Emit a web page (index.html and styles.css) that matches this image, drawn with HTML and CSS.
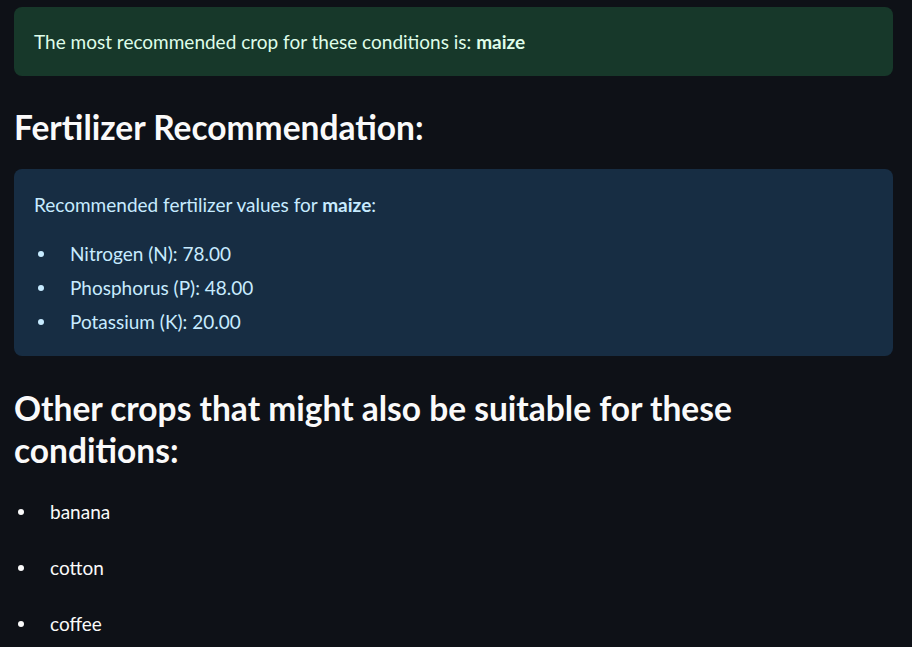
FILE: index.html
```html
<!DOCTYPE html>
<html>
<head>
<meta charset="utf-8">
<link rel="stylesheet" href="styles.css">
</head>
<body>
<main class="page">
  <div class="alert alert-success">The most recommended crop for these conditions is: <strong>maize</strong></div>
  <h3 class="heading heading-semi">Fertilizer Recommendation:</h3>
  <div class="alert alert-info">
    <p class="alert-lead">Recommended fertilizer values for <strong>maize</strong>:</p>
    <ul class="dots dots-tight">
      <li>Nitrogen (N): 78.00</li>
      <li>Phosphorus (P): 48.00</li>
      <li>Potassium (K): 20.00</li>
    </ul>
  </div>
  <h3 class="heading heading-bold">Other crops that might also be suitable for these conditions:</h3>
  <ul class="dots dots-loose">
    <li>banana</li>
    <li>cotton</li>
    <li>coffee</li>
  </ul>
</main>
</body>
</html>
```

FILE: styles.css
```css
html, body {
  margin: 0;
  padding: 0;
  background: #0e1117;
}
body {
  font-family: Lato, "Noto Sans", sans-serif;
  font-size: 19px;
  color: #fafafa;
}
.page {
  width: 879px;
  padding: 7px 0 0 14px;
}
.alert {
  border-radius: 8px;
  padding: 22px 20px;
  line-height: 25px;
}
.alert strong { font-weight: 700; }
.alert-success {
  background: #17382a;
  color: #dffde9;
}
.alert-info {
  background: #172d43;
  color: #c7ebff;
  padding: 23px 20px 17px;
}
.alert-lead { margin: 0 0 20px; }
.heading {
  margin: 0;
  line-height: 42px;
  color: #fafafa;
  width: 760px;
}
.heading-semi {
  font-size: 33.5px;
  font-weight: 700;
  padding: 30px 0 21px;
}
.heading-bold {
  font-size: 33.5px;
  font-weight: 700;
  padding: 31px 0 13px;
}
.dots {
  list-style: none;
  margin: 0;
  padding: 0;
}
.dots li {
  position: relative;
}
.dots li::before {
  content: "";
  position: absolute;
  width: 6px;
  height: 6px;
  border-radius: 50%;
  background: currentColor;
  top: 50%;
  margin-top: -3px;
}
.dots-tight li {
  line-height: 34px;
  padding-left: 36px;
}
.dots-tight li::before { left: 4px; }
.dots-loose li {
  line-height: 56px;
  padding-left: 36px;
}
.dots-loose li::before { left: 4px; }
```
